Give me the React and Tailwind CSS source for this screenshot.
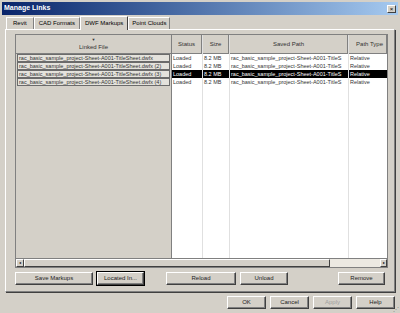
import React from 'react';

const files = [
  'rac_basic_sample_project-Sheet-A001-TitleSheet.dwfx',
  'rac_basic_sample_project-Sheet-A001-TitleSheet.dwfx (2)',
  'rac_basic_sample_project-Sheet-A001-TitleSheet.dwfx (3)',
  'rac_basic_sample_project-Sheet-A001-TitleSheet.dwfx (4)',
];

const Btn = ({ children, className = '', disabled = false }) => (
  <div
    className={`h-[13px] flex items-center justify-center bg-[#d4d0c8] border border-t-white border-l-white border-r-[#404040] border-b-[#404040] shadow-[inset_-1px_-1px_0_#808080] text-[6px] ${disabled ? 'text-[#a0a0a0]' : 'text-[#222]'} ${className}`}
  >
    {children}
  </div>
);

const App = () => {
  const selected = 2;
  return (
    <div className="w-[400px] h-[313px] bg-[#d4d0c8] flex flex-col overflow-hidden relative font-['Liberation_Sans',Arial,sans-serif] text-black">
      {/* title bar */}
      <div className="mt-[2px] mx-[2px] h-[13px] bg-gradient-to-r from-[#0a246a] to-[#a6caf0] flex items-center pl-[2px] pr-[2px]">
        <span className="text-white font-bold text-[7px]">Manage Links</span>
        <div className="ml-auto w-[9px] h-[8px] bg-[#d4d0c8] border border-t-white border-l-white border-r-[#404040] border-b-[#404040] flex items-center justify-center text-[6px] leading-none">
          ×
        </div>
      </div>

      {/* tabs */}
      <div className="flex items-end pl-[6px] h-[13px] mt-[1px]">
        <div className="h-[12px] px-[6px] flex items-center border border-b-0 border-t-white border-l-white border-r-[#808080] text-[6px]">Revit</div>
        <div className="h-[12px] px-[4px] flex items-center border border-b-0 border-t-white border-l-white border-r-[#808080] text-[6px]">CAD Formats</div>
        <div className="h-[14px] px-[4px] flex items-center border border-b-0 border-t-white border-l-white border-r-[#404040] text-[6px] bg-[#d4d0c8] -mb-[1px] relative z-10">DWF Markups</div>
        <div className="h-[12px] px-[3px] flex items-center border border-b-0 border-t-white border-l-white border-r-[#808080] text-[6px]">Point Clouds</div>
      </div>

      {/* panel */}
      <div className="mx-[5px] h-[263px] border border-t-white border-l-white border-r-[#808080] border-b-[#808080] shadow-[1px_1px_0_#404040] flex flex-col pt-[4px] px-[9px]">
        {/* table */}
        <div className="h-[234px] w-[373px] border border-[#808080] flex flex-col">
          <div className="flex flex-1 min-h-0">
            {/* frozen column */}
            <div className="w-[156px] bg-[#d4d0c8] border-r border-[#808080] flex flex-col">
              <div className="h-[19px] border-b border-[#808080] flex flex-col items-center justify-center text-[6px] text-[#333]">
                <span className="text-[4px] leading-none">▼</span>
                <span className="leading-none mt-[2px]">Linked File</span>
              </div>
              {files.map((f) => (
                <div key={f} className="h-[8px] mx-[1px] border border-[#6b6b6b] bg-[#e4e2dc] flex items-center px-[1px] text-[5.5px] text-[#333] whitespace-nowrap overflow-hidden">
                  {f}
                </div>
              ))}
            </div>
            {/* scrolling columns */}
            <div className="flex-1 bg-white flex">
              {[
                ['Status', 'w-[31px]', 'justify-center', 'Loaded'],
                ['Size', 'w-[27px]', 'justify-center', '8.2 MB'],
                ['Saved Path', 'w-[119px]', 'justify-center', 'rac_basic_sample_project-Sheet-A001-TitleS'],
                ['Path Type', 'flex-1', 'justify-end', 'Relative'],
              ].map(([h, w, j, v], ci) => (
                <div key={h} className={`${w} flex flex-col border-r border-[#e0e0e0] last:border-r-0`}>
                  <div className={`h-[19px] bg-[#d4d0c8] border-b border-r border-[#808080] flex items-center ${j} px-[3px] text-[6px] text-[#333]`}>
                    {h}
                  </div>
                  {files.map((f, ri) => (
                    <div
                      key={f}
                      className={`h-[8px] flex items-center pl-[1px] text-[5.5px] whitespace-nowrap overflow-hidden ${ri === selected ? 'bg-black text-white' : 'text-[#333]'}`}
                    >
                      {v}
                    </div>
                  ))}
                </div>
              ))}
            </div>
          </div>
          {/* scrollbar */}
          <div className="h-[9px] flex border-t border-[#808080] bg-[#ece9e2]">
            <div className="w-[8px] bg-[#d4d0c8] border border-t-white border-l-white border-r-[#404040] border-b-[#404040] flex items-center justify-center text-[4px] leading-none">◂</div>
            <div className="w-[306px] bg-[#d4d0c8] border border-t-white border-l-white border-r-[#404040] border-b-[#404040]" />
            <div className="flex-1" />
            <div className="w-[7px] bg-[#d4d0c8] border border-t-white border-l-white border-r-[#404040] border-b-[#404040] flex items-center justify-center text-[4px] leading-none">▸</div>
          </div>
        </div>

        {/* action buttons */}
        <div className="flex mt-[4px]">
          <Btn className="w-[78px]">Save Markups</Btn>
          <Btn className="w-[47px] ml-[4px] outline outline-1 outline-black">Located In...</Btn>
          <Btn className="w-[70px] ml-[22px]">Reload</Btn>
          <Btn className="w-[48px] ml-[4px]">Unload</Btn>
          <Btn className="w-[47px] ml-auto">Remove</Btn>
        </div>
      </div>

      {/* dialog buttons */}
      <div className="flex justify-end pr-[5px] mt-[4px] gap-[4px]">
        <Btn className="w-[39px] h-[12px]">OK</Btn>
        <Btn className="w-[39px] h-[12px]">Cancel</Btn>
        <Btn className="w-[39px] h-[12px]" disabled>Apply</Btn>
        <Btn className="w-[39px] h-[12px]">Help</Btn>
      </div>

      {/* resize grip */}
      <div className="absolute right-[1px] bottom-[1px] text-[#808080] text-[6px] leading-none">⋰</div>
    </div>
  );
};

export default App;
